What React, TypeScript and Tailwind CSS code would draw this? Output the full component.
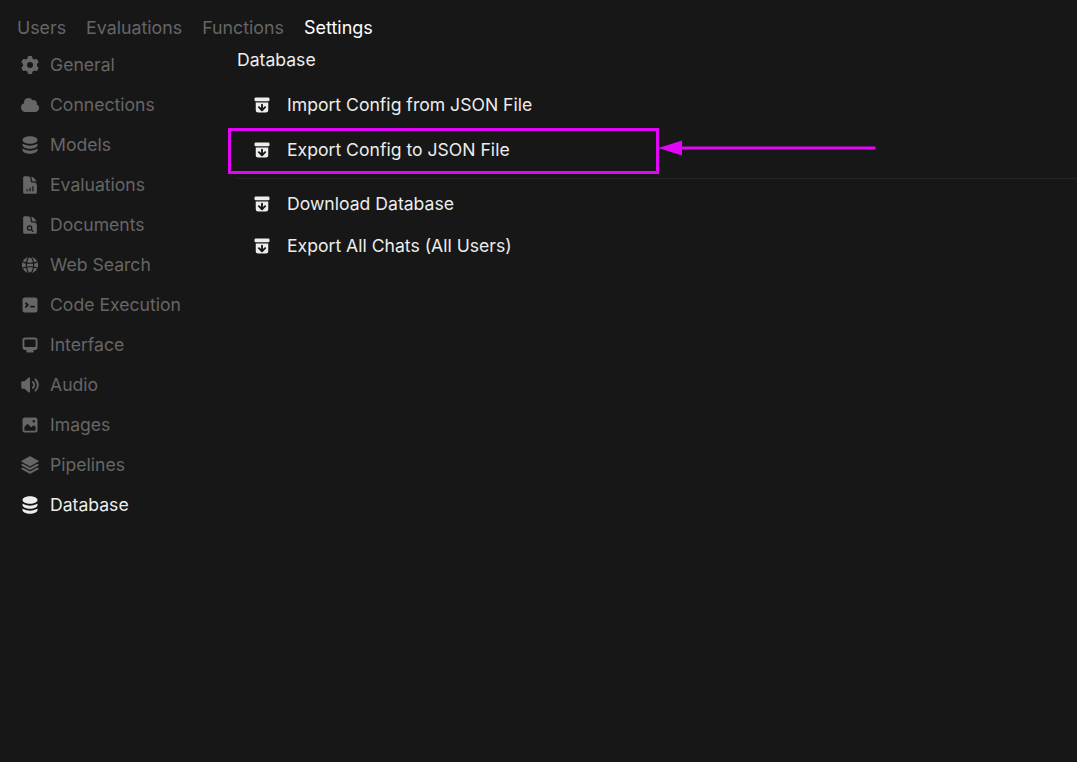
import type { ReactNode } from "react";

const Icon = ({ box = 16, children }: { box?: number; children: ReactNode }) => (
  <svg viewBox={`0 0 ${box} ${box}`} fill="currentColor" className="h-5 w-5 shrink-0">
    {children}
  </svg>
);

const DB = (
  <Icon>
    <path d="M8 7c3.314 0 6-1.343 6-3s-2.686-3-6-3-6 1.343-6 3 2.686 3 6 3Z" />
    <path d="M8 8.5c1.84 0 3.579-.37 4.914-1.037A6.33 6.33 0 0 0 14 6.78V8c0 1.657-2.686 3-6 3S2 9.657 2 8V6.78c.346.273.72.5 1.087.683C4.42 8.131 6.16 8.5 8 8.5Z" />
    <path d="M8 12.5c1.84 0 3.579-.37 4.914-1.037.366-.183.74-.41 1.086-.684V12c0 1.657-2.686 3-6 3s-6-1.343-6-3v-1.22c.346.273.72.5 1.087.683C4.42 12.131 6.16 12.5 8 12.5Z" />
  </Icon>
);

const docShape = (
  <>
    <path d="M5.625 1.5H9a3.75 3.75 0 0 1 3.75 3.75v1.875c0 1.036.84 1.875 1.875 1.875H16.5a3.75 3.75 0 0 1 3.75 3.75v7.875c0 1.035-.84 1.875-1.875 1.875H5.625a1.875 1.875 0 0 1-1.875-1.875V3.375c0-1.036.84-1.875 1.875-1.875Z" />
    <path d="M12.971 1.816A5.23 5.23 0 0 1 14.25 5.25v1.875c0 .207.168.375.375.375H16.5a5.23 5.23 0 0 1 3.434 1.279 9.768 9.768 0 0 0-6.963-6.963Z" />
  </>
);

const sideItems: { label: string; icon: ReactNode; active?: boolean }[] = [
  {
    label: "General",
    icon: (
      <Icon box={20}>
        <path
          fillRule="evenodd"
          d="M7.84 1.804A1 1 0 0 1 8.82 1h2.36a1 1 0 0 1 .98.804l.331 1.652a6.993 6.993 0 0 1 1.929 1.115l1.598-.54a1 1 0 0 1 1.186.447l1.18 2.044a1 1 0 0 1-.205 1.251l-1.267 1.113a7.047 7.047 0 0 1 0 2.228l1.267 1.113a1 1 0 0 1 .206 1.25l-1.18 2.045a1 1 0 0 1-1.187.447l-1.598-.54a6.993 6.993 0 0 1-1.929 1.115l-.33 1.652a1 1 0 0 1-.98.804H8.82a1 1 0 0 1-.98-.804l-.331-1.652a6.993 6.993 0 0 1-1.929-1.115l-1.598.54a1 1 0 0 1-1.186-.447l-1.18-2.044a1 1 0 0 1 .205-1.251l1.267-1.114a7.05 7.05 0 0 1 0-2.227L1.821 7.773a1 1 0 0 1-.206-1.25l1.18-2.045a1 1 0 0 1 1.187-.447l1.598.54A6.992 6.992 0 0 1 7.51 3.456l.33-1.652ZM10 13a3 3 0 1 0 0-6 3 3 0 0 0 0 6Z"
        />
      </Icon>
    ),
  },
  {
    label: "Connections",
    icon: (
      <Icon box={20}>
        <path d="M1 12.5A4.5 4.5 0 0 0 5.5 17H15a4 4 0 0 0 1.866-7.539 3.504 3.504 0 0 0-4.504-4.272A4.5 4.5 0 0 0 4.06 8.235 4.502 4.502 0 0 0 1 12.5Z" />
      </Icon>
    ),
  },
  { label: "Models", icon: DB },
  {
    label: "Evaluations",
    icon: (
      <Icon box={24}>
        {docShape}
        <path d="M8.500 19v-1.500M12 19v-3M15.500 19v-5" stroke="#171717" strokeWidth="1.5" strokeLinecap="round" />
      </Icon>
    ),
  },
  {
    label: "Documents",
    icon: (
      <Icon box={24}>
        {docShape}
        <circle cx="11.500" cy="15.500" r="2.600" fill="none" stroke="#171717" strokeWidth="1.5" />
        <path d="m13.500 17.500 2 2" stroke="#171717" strokeWidth="1.5" strokeLinecap="round" />
      </Icon>
    ),
  },
  {
    label: "Web Search",
    icon: (
      <Icon box={24}>
        <circle cx="12" cy="12" r="9.750" />
        <g fill="none" stroke="#171717" strokeWidth="1.400">
          <ellipse cx="12" cy="12" rx="4.400" ry="9.750" />
          <path d="M3.400 8.500c5 1.600 12.200 1.600 17.200 0M3.400 15.500c5-1.600 12.200-1.600 17.200 0" />
        </g>
      </Icon>
    ),
  },
  {
    label: "Code Execution",
    icon: (
      <Icon box={16}>
        <path
          fillRule="evenodd"
          d="M2 4a2 2 0 0 1 2-2h8a2 2 0 0 1 2 2v8a2 2 0 0 1-2 2H4a2 2 0 0 1-2-2V4Zm2.22 1.97a.75.75 0 0 0 0 1.06l.97.97-.97.97a.75.75 0 1 0 1.06 1.06l1.5-1.5a.75.75 0 0 0 0-1.06l-1.5-1.5a.75.75 0 0 0-1.06 0ZM8.75 8.5a.75.75 0 0 0 0 1.5h2.500a.75.75 0 0 0 0-1.500h-2.500Z"
        />
      </Icon>
    ),
  },
  {
    label: "Interface",
    icon: (
      <Icon box={16}>
        <path
          fillRule="evenodd"
          d="M2 4.250A2.250 2.250 0 0 1 4.250 2h7.500A2.250 2.250 0 0 1 14 4.250v5.500A2.250 2.250 0 0 1 11.750 12h-1.312c.1.128.21.248.328.36a.75.75 0 0 1 .234.545v.345a.75.75 0 0 1-.75.75h-4.500a.75.75 0 0 1-.75-.75v-.345a.75.75 0 0 1 .234-.545c.118-.111.228-.232.328-.36H4.250A2.250 2.250 0 0 1 2 9.750v-5.500Zm2.250-.75a.75.75 0 0 0-.75.75v4.500c0 .414.336.75.75.75h7.500a.75.75 0 0 0 .75-.75v-4.500a.75.75 0 0 0-.75-.75h-7.500Z"
        />
      </Icon>
    ),
  },
  {
    label: "Audio",
    icon: (
      <Icon box={16}>
        <path d="M7.557 2.066A.75.75 0 0 1 8 2.75v10.500a.75.75 0 0 1-1.248.56L3.59 11H2a1 1 0 0 1-1-1V6a1 1 0 0 1 1-1h1.59l3.162-2.81a.75.75 0 0 1 .805-.124ZM12.950 3.050a.75.75 0 1 0-1.06 1.060 5.500 5.500 0 0 1 0 7.780.75.75 0 1 0 1.060 1.060 7 7 0 0 0 0-9.900Z" />
        <path d="M10.828 5.172a.75.75 0 1 0-1.06 1.06 2.500 2.500 0 0 1 0 3.536.75.75 0 1 0 1.06 1.06 4 4 0 0 0 0-5.656Z" />
      </Icon>
    ),
  },
  {
    label: "Images",
    icon: (
      <Icon box={16}>
        <path
          fillRule="evenodd"
          d="M2 4a2 2 0 0 1 2-2h8a2 2 0 0 1 2 2v8a2 2 0 0 1-2 2H4a2 2 0 0 1-2-2V4Zm10.500 5.707a.5.5 0 0 0-.146-.353l-1-1a.5.5 0 0 0-.708 0L9.354 9.646a.5.5 0 0 1-.708 0L6.354 7.354a.5.5 0 0 0-.708 0l-2 2a.5.5 0 0 0-.146.353V12a.5.5 0 0 0 .5.5h8a.5.5 0 0 0 .5-.5V9.707ZM12 5a1 1 0 1 1-2 0 1 1 0 0 1 2 0Z"
        />
      </Icon>
    ),
  },
  {
    label: "Pipelines",
    icon: (
      <Icon box={24}>
        <path d="M11.644 1.59a.75.75 0 0 1 .712 0l9.75 5.25a.75.75 0 0 1 0 1.32l-9.75 5.25a.75.75 0 0 1-.712 0l-9.75-5.25a.75.75 0 0 1 0-1.32l9.75-5.25Z" />
        <path d="m3.265 10.602 7.668 4.129a2.25 2.25 0 0 0 2.134 0l7.668-4.13 1.37.739a.75.75 0 0 1 0 1.32l-9.75 5.25a.75.75 0 0 1-.712 0l-9.75-5.25a.75.75 0 0 1 0-1.32l1.37-.738Z" />
        <path d="m10.933 19.231-7.668-4.13-1.37.739a.75.75 0 0 0 0 1.32l9.75 5.25c.221.12.489.12.71 0l9.75-5.25a.75.75 0 0 0 0-1.32l-1.37-.738-7.668 4.13a2.25 2.25 0 0 1-2.134-.001Z" />
      </Icon>
    ),
  },
  { label: "Database", icon: DB, active: true },
];

const ArchiveIcon = () => (
  <Icon>
    <path d="M2 3a1 1 0 0 1 1-1h10a1 1 0 0 1 1 1v1a1 1 0 0 1-1 1H3a1 1 0 0 1-1-1V3Z" />
    <path
      fillRule="evenodd"
      d="M13 6H3v6a2 2 0 0 0 2 2h6a2 2 0 0 0 2-2V6ZM8.75 7.75a.75.75 0 0 0-1.5 0v2.69L6.03 9.22a.75.75 0 0 0-1.06 1.06l2.5 2.5a.75.75 0 0 0 1.06 0l2.5-2.5a.75.75 0 1 0-1.06-1.06l-1.22 1.22V7.75Z"
    />
  </Icon>
);

const ActionRow = ({ label, className }: { label: string; className: string }) => (
  <div className={`flex items-center gap-[15px] pl-[15px] text-[#ededed] ${className}`}>
    <ArchiveIcon />
    <span>{label}</span>
  </div>
);

export default function App() {
  return (
    <div className="relative h-[762px] w-full overflow-hidden bg-[#171717] font-['Inter',sans-serif] text-[17.6px] leading-[28px]">
      {/* top tabs */}
      <div className="flex gap-5 pl-[17px] pt-[14px] text-[17.8px] text-[#666666]">
        <span>Users</span>
        <span>Evaluations</span>
        <span>Functions</span>
        <span className="text-[18px] text-white">Settings</span>
      </div>

      <div className="mt-1 flex">
        {/* settings sidebar */}
        <div className="flex w-[237px] shrink-0 flex-col gap-3 pl-5 pt-[5px]">
          {sideItems.map((item) => (
            <div
              key={item.label}
              className={`flex items-center gap-[10px] ${item.active ? "text-[#ededed]" : "text-[#666666]"}`}
            >
              {item.icon}
              <span>{item.label}</span>
            </div>
          ))}
        </div>

        {/* database panel */}
        <div className="flex-1">
          <div className="text-[#ededed]">Database</div>
          <ActionRow label="Import Config from JSON File" className="mt-[17px]" />
          <ActionRow label="Export Config to JSON File" className="mt-[17px]" />
          <div className="mt-[14px] border-t border-[#262626]" />
          <ActionRow label="Download Database" className="mt-[11px]" />
          <ActionRow label="Export All Chats (All Users)" className="mt-[14px]" />
        </div>
      </div>

      {/* annotation */}
      <div className="absolute left-[228px] top-[128px] h-[46px] w-[431px] border-[3px] border-[#e205f7]" />
      <svg className="absolute left-[655px] top-[135px]" width="225" height="26" viewBox="0 0 225 26">
        <path d="M25 13h195.500" stroke="#e205f7" strokeWidth="3" />
        <path d="M3.500 13 27 5.500v15Z" fill="#e205f7" />
      </svg>
    </div>
  );
}
